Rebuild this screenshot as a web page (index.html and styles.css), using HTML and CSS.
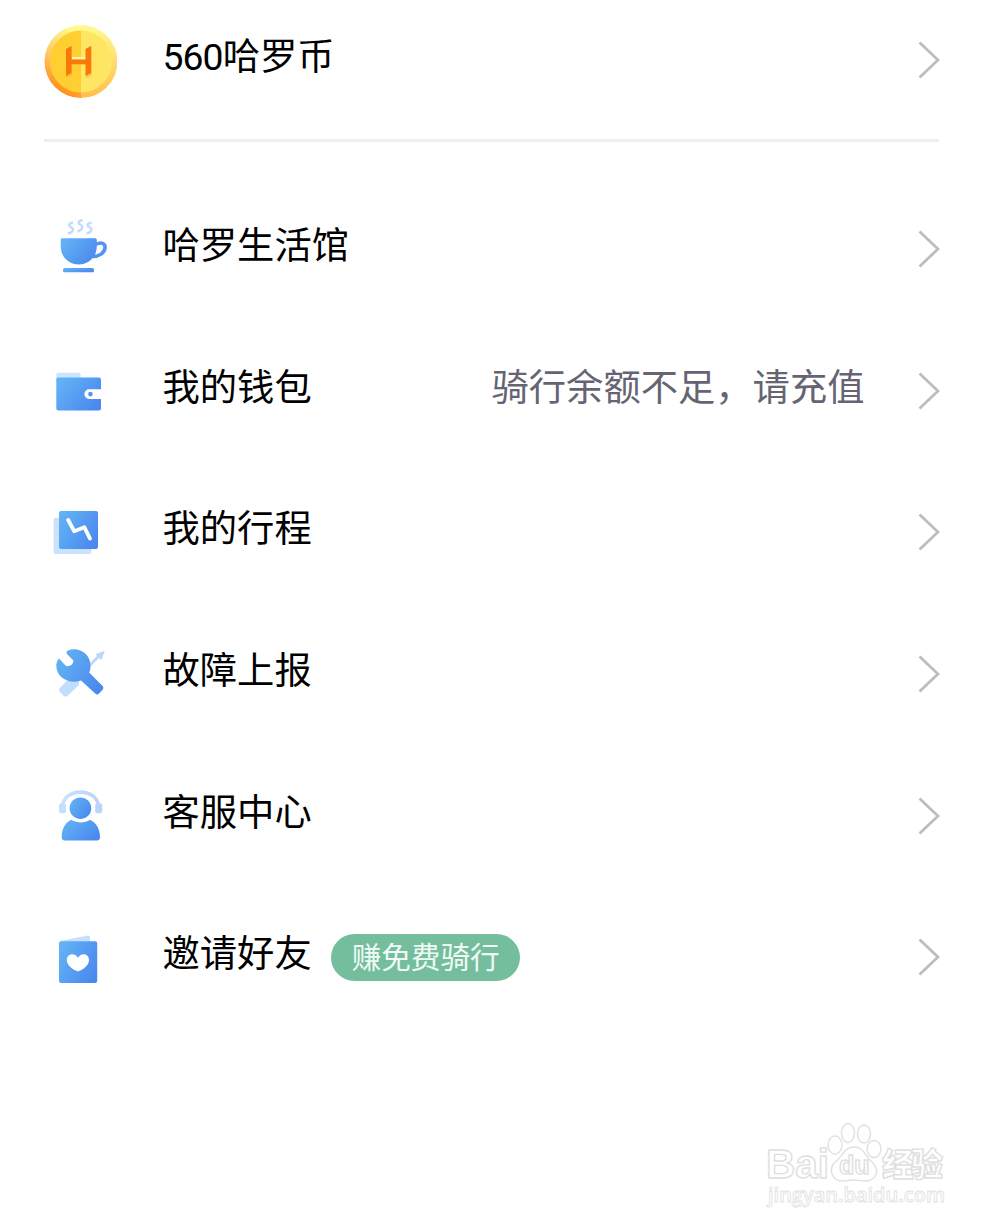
FILE: index.html
```html
<!DOCTYPE html>
<html lang="zh-CN">
<head>
  <meta charset="UTF-8">
  <meta name="viewport" content="width=device-width, initial-scale=1.0">
  <title>哈罗单车</title>
  <link rel="stylesheet" href="styles.css">
</head>
<body>
  <!-- shared gradients and chevron -->
  <svg class="defs" width="0" height="0">
    <defs>
      <linearGradient id="blue" x1="0" y1="0.2" x2="1" y2="0.8">
        <stop offset="0" stop-color="#62b3f5"/>
        <stop offset="1" stop-color="#4a87ee"/>
      </linearGradient>
      <linearGradient id="light" x1="0" y1="0" x2="1" y2="0">
        <stop offset="0" stop-color="#c6e2fc"/>
        <stop offset="1" stop-color="#bdd3fa"/>
      </linearGradient>
      <linearGradient id="rimLeft" x1="0.6" y1="0" x2="0.3" y2="1">
        <stop offset="0" stop-color="#fffa90"/>
        <stop offset="0.5" stop-color="#ffc766"/>
        <stop offset="0.85" stop-color="#ff951f"/>
      </linearGradient>
      <linearGradient id="rimRight" x1="0" y1="0" x2="0" y2="1">
        <stop offset="0" stop-color="#fffa90"/>
        <stop offset="0.6" stop-color="#ffd768"/>
        <stop offset="1" stop-color="#ffbd4a"/>
      </linearGradient>
      <symbol id="chevron" viewBox="0 0 22 38">
        <path d="M1.5 1.5L20 19L1.5 36.5" fill="none" stroke="#bcbcc2" stroke-width="2.8"/>
      </symbol>
    </defs>
  </svg>

  <div class="page">
    <div class="row coin">
      <svg class="icon" viewBox="0 0 73 73">
        <path d="M37 0A36.5 36.5 0 0 0 37 73Z" fill="url(#rimLeft)"/>
        <path d="M37 0A36.5 36.5 0 0 1 37 73Z" fill="url(#rimRight)"/>
        <path d="M37 5.500A31 31 0 0 0 37 67.500Z" fill="#ffcf31"/>
        <path d="M37 5.500A31 31 0 0 1 37 67.500Z" fill="#ffe662"/>
        <path d="M22 24L28 21V35H42V24L48 21V50L42 53V40H28V50L22 53Z" fill="#ffa838" opacity="0.6"/>
        <path d="M28 34.500V32H41V34.500Z" fill="#fff3b0"/>
        <path d="M22 24L27.500 21V34.500H41.500V24L47 21V48L41.500 51V39H27.500V48L22 51Z" fill="#f87908"/>
      </svg>
      <span class="label"><span class="count">560</span>哈罗币</span>
      <svg class="arrow"><use href="#chevron"/></svg>
    </div>

    <div class="menu">
      <div class="row">
        <svg class="icon" viewBox="0 0 72 72">
          <g fill="none" stroke="#bfdcfb" stroke-width="2.400">
            <path d="M29 9.500C23 11 25 13.500 27.500 14.500C30 16 29 19.500 24 20.500"/>
            <path d="M38.500 7C32.500 8.500 34.500 11 37 12C39.500 13.500 38.500 17 33.500 18.500"/>
            <path d="M47.500 9.500C41.500 11 43.500 13.500 46 14.500C48.500 16 47.500 19.500 42.500 20.500"/>
          </g>
          <path d="M52 31.500C57 28.500 61.500 30.500 61 35C60.500 40 55 43.500 49 43.500" fill="none" stroke="#5193f2" stroke-width="3.600"/>
          <path d="M18.200 25.200H51.200Q52.800 25.200 52.800 27V33C52.800 44 45 51.400 34.700 51.400S16.700 44 16.700 33V27Q16.700 25.200 18.200 25.200Z" fill="url(#blue)"/>
          <rect x="19" y="55" width="31" height="4.200" rx="1.500" fill="url(#blue)"/>
        </svg>
        <span class="label">哈罗生活馆</span>
        <svg class="arrow"><use href="#chevron"/></svg>
      </div>

      <div class="row">
        <svg class="icon" viewBox="0 0 72 72">
          <path d="M12.300 26V19.500Q12.300 17.700 14.300 17.700H34.700Q36.700 17.700 36.700 19.500V26Z" fill="#cce4fc"/>
          <path d="M14 22.500H55Q57 22.500 57 24.500V34.300H45.200A4.800 4.800 0 0 0 45.200 43.900H57V53.500Q57 55.500 55 55.500H14.300Q12.300 55.500 12.300 53.500V24.500Q12.300 22.500 14 22.500Z" fill="url(#blue)"/>
          <circle cx="46.400" cy="39.100" r="2.300" fill="#5294f0"/>
        </svg>
        <span class="label">我的钱包</span>
        <span class="note">骑行余额不足，请充值</span>
        <svg class="arrow"><use href="#chevron"/></svg>
      </div>

      <div class="row">
        <svg class="icon" viewBox="0 0 72 72">
          <rect x="9.700" y="21.800" width="37.600" height="36.200" rx="1.800" fill="#cbe2fc"/>
          <rect x="15" y="14.900" width="39" height="38" rx="1.800" fill="url(#blue)"/>
          <path d="M24.200 24L30.300 35.300L40.300 31.200L46 42.600" fill="none" stroke="#fff" stroke-width="3.800" stroke-linecap="round" stroke-linejoin="round"/>
        </svg>
        <span class="label">我的行程</span>
        <svg class="arrow"><use href="#chevron"/></svg>
      </div>

      <div class="row">
        <svg class="icon" viewBox="0 0 72 72">
          <path d="M28 37L15.500 50.500Q14.300 52 15.500 53.500L20 58Q21.800 59.300 23.300 58L35 47V40Z" fill="#c2defc"/>
          <path d="M44 29L55 18" stroke="#bfd5fa" stroke-width="3"/>
          <path d="M60.800 12.800L51.300 16.300L57.300 22.300Z" fill="#bfd5fa"/>
          <path d="M15 20.500L21.500 27.500C24 29.500 29.800 27 29.300 22.500L22.500 15.500Q22 13.500 24 12.500C34 8.500 46.500 15 46.500 28Q46.500 32 45.200 34.500L58.800 48.300Q60 50 58.800 51.500L55 55.500Q53.300 57.300 51.500 55.800L37 42.500C26 46.500 12.500 40 12.300 28Q12.300 23 15 20.500Z" fill="url(#blue)"/>
        </svg>
        <span class="label">故障上报</span>
        <svg class="arrow"><use href="#chevron"/></svg>
      </div>

      <div class="row">
        <svg class="icon" viewBox="0 0 72 72">
          <path d="M18.500 26C20.500 7.500 52.500 7.500 54.500 26" fill="none" stroke="url(#light)" stroke-width="3.600"/>
          <rect x="15" y="23.200" width="7" height="10" rx="2.500" fill="#c2e0fc"/>
          <rect x="51.200" y="23.200" width="7" height="10" rx="2.500" fill="#bdd3fa"/>
          <circle cx="36.400" cy="28.200" r="10.800" fill="url(#blue)"/>
          <path d="M27.500 39.800C33 43.500 40.500 43.500 46 39.800C52 42.500 56 49 56 57Q56 60.400 53 60.400H20.700Q17.700 60.400 17.700 57C17.700 49 21.500 42 27.500 39.800Z" fill="url(#blue)"/>
        </svg>
        <span class="label">客服中心</span>
        <svg class="arrow"><use href="#chevron"/></svg>
      </div>

      <div class="row">
        <svg class="icon" viewBox="0 0 72 72">
          <path d="M16 20L44 14.500Q46 14.300 46 16.300V22H16Z" fill="#c6dffb"/>
          <rect x="15" y="20.200" width="38.200" height="41.900" rx="2" fill="url(#blue)"/>
          <path d="M34 50.400C28 48.500 22.800 44 22.800 39C22.800 33 30.500 31 34 36.800C37.500 31 45 33 45 39C45 44 40 48.500 34 50.400Z" fill="#fff"/>
        </svg>
        <span class="label">邀请好友</span>
        <span class="tag">赚免费骑行</span>
        <svg class="arrow"><use href="#chevron"/></svg>
      </div>
    </div>
  </div>

  <svg class="watermark" viewBox="0 0 190 96">
    <g class="outline">
      <text x="4" y="58" class="brand" textLength="63" lengthAdjust="spacingAndGlyphs">Bai</text>
      <ellipse cx="73" cy="25" rx="7" ry="9"/>
      <ellipse cx="86" cy="13" rx="6.500" ry="9.500"/>
      <ellipse cx="102" cy="14" rx="6.500" ry="9"/>
      <ellipse cx="112" cy="29" rx="7" ry="8.500"/>
      <path d="M92 27C81 27 82 36 72 43C66 51 71 61 80 61C86 61 88 60 92 60S99 61 105 61C114 60 118 51 111 43C102 36 103 27 92 27Z"/>
      <text x="77" y="54" class="du">du</text>
      <text x="120" y="56" class="cn" textLength="61">经验</text>
      <text x="6" y="82" class="url" textLength="177" lengthAdjust="spacingAndGlyphs">jingyan.baidu.com</text>
    </g>
  </svg>
</body>
</html>
```
FILE: styles.css
```css
* {
  box-sizing: border-box;
}
body {
  margin: 0;
  background: #fff;
  color: #000;
  font-family: Roboto, "Noto Sans CJK SC", sans-serif;
  font-size: 37.3px;
}
.defs {
  display: block;
}
.page {
  height: 1230px;
  padding: 0 60px 0 44px;
}
.row {
  display: flex;
  align-items: center;
  height: 141.7px;
}
.icon {
  flex: none;
  width: 72px;
  height: 72px;
  margin-right: 46.5px;
}
.label,
.note {
  line-height: 54px;
  padding-bottom: 5.6px;
  white-space: nowrap;
}
.arrow {
  flex: none;
  width: 22px;
  height: 38px;
  margin-left: auto;
}
.count {
  letter-spacing: -0.9px;
}
.coin {
  height: 142px;
  margin-right: 1px;
  padding-bottom: 19px;
  border-bottom: 3px solid #eee;
}
.coin .icon {
  width: 73px;
  height: 73px;
  margin-right: 45.5px;
  margin-top: 2px;
}
.coin .arrow {
  margin-right: -1px;
}
.menu {
  padding-top: 36px;
}
.note {
  margin-left: auto;
  color: #666473;
}
.note + .arrow {
  margin-left: 53.5px;
}
.tag {
  height: 47px;
  margin-left: 19px;
  padding: 0 20px 0 21px;
  border-radius: 24px;
  background: #74be9d;
  color: #f0faf5;
  font-size: 29.6px;
  line-height: 49px;
}

/* watermark lies over the page corner */
.watermark {
  position: absolute;
  left: 762px;
  top: 1120px;
  width: 190px;
  height: 96px;
}
.outline {
  fill: #fff;
  stroke: #e0e0e0;
  stroke-width: 1.4;
  font-family: "Liberation Sans", "Noto Sans CJK SC", sans-serif;
  font-weight: bold;
}
.brand {
  font-size: 40px;
}
.du {
  font-size: 25px;
}
.cn {
  font-family: "Noto Sans CJK SC", sans-serif;
  font-size: 32px;
  font-weight: 900;
}
.url {
  font-family: "Open Sans", sans-serif;
  font-size: 20px;
  font-weight: 600;
  stroke-width: 0.8;
}
```
